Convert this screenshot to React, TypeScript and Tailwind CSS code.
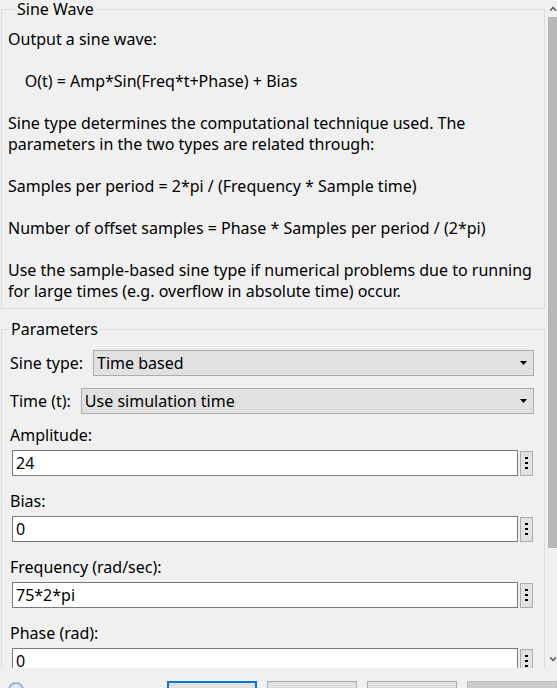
import React from "react";

// Text of the block description
const description: string[][] = [
  ["Output a sine wave:"],
  ["    O(t) = Amp*Sin(Freq*t+Phase) + Bias"],
  [
    "Sine type determines the computational technique used. The",
    "parameters in the two types are related through:",
  ],
  ["Samples per period = 2*pi / (Frequency * Sample time)"],
  ["Number of offset samples = Phase * Samples per period / (2*pi)"],
  [
    "Use the sample-based sine type if numerical problems due to running",
    "for large times (e.g. overflow in absolute time) occur.",
  ],
];

// Edit fields shown under the dropdowns
const fields = [
  { label: "Amplitude:", value: "24" },
  { label: "Bias:", value: "0" },
  { label: "Frequency (rad/sec):", value: "75*2*pi" },
  { label: "Phase (rad):", value: "0" },
];

const font = { fontFamily: '"Noto Sans", "Open Sans", sans-serif' };

// Dropdown that looks like a Windows combo box
const Select = ({ label, value }: { label: string; value: string }) => (
  <div className="flex items-center h-[26px]">
    <span className="pl-[8px] pr-[10px] whitespace-nowrap">{label}</span>
    <div className="flex-1 mr-[10px] h-[26px] flex items-center justify-between bg-[#e1e1e1] border border-[#adadad] pl-[3px] pr-[6px]">
      <span>{value}</span>
      <svg width="7" height="4" viewBox="0 0 7 4">
        <path d="M0 0h7L3.5 4z" fill="#000" />
      </svg>
    </div>
  </div>
);

// Text field with the "..." vertical dots button
const Field = ({ label, value }: { label: string; value: string }) => (
  <div className="flex flex-col">
    <span className="pl-[8px] h-[21px] leading-[21px]">{label}</span>
    <div className="flex items-center mt-[4px] pl-[10px] pr-[11px] gap-[2px]">
      <div className="flex-1 h-[26px] bg-white border border-[#7a7a7a] flex items-center pl-[3px]">
        {value}
      </div>
      <div className="w-[13px] h-[25px] bg-[#e1e1e1] border border-[#adadad] flex flex-col items-center justify-center gap-[3px]">
        <span className="w-[3px] h-[2px] bg-black" />
        <span className="w-[3px] h-[2px] bg-black" />
        <span className="w-[3px] h-[2px] bg-black" />
      </div>
    </div>
  </div>
);

export default function App() {
  return (
    <div
      className="w-[557px] h-[688px] overflow-hidden flex flex-col bg-[#f0f0f0] text-[16px] text-black"
      style={font}
    >
      {/* Scrolling area */}
      <div className="h-[668px] shrink-0 flex overflow-hidden">
        <div className="w-[547px] pl-[1px] pr-[2px] flex flex-col">
          {/* Sine Wave group */}
          <fieldset className="border border-[#dcdcdc] pl-[6px] pt-[11px] pb-[6px]">
            <legend className="ml-[7px] px-[2px] leading-[18px]">Sine Wave</legend>
            <div className="flex flex-col gap-[21px] leading-[21px]">
              {description.map((para, i) => (
                <div key={i} className="whitespace-pre">
                  {para.map((line) => (
                    <div key={line}>{line}</div>
                  ))}
                </div>
              ))}
            </div>
          </fieldset>

          {/* Parameters group */}
          <fieldset className="mt-[11px] border border-[#dcdcdc] border-b-0 pt-[12px] flex flex-col">
            <legend className="ml-[7px] px-[2px] leading-[18px]">Parameters</legend>
            <div className="flex flex-col gap-[12px]">
              <Select label="Sine type:" value="Time based" />
              <Select label="Time (t):" value="Use simulation time" />
            </div>
            <div className="flex flex-col gap-[15px] mt-[11px]">
              {fields.map((f) => (
                <Field key={f.label} label={f.label} value={f.value} />
              ))}
            </div>
          </fieldset>
        </div>

        {/* Scrollbar */}
        <div className="flex-1 flex flex-col">
          <div className="h-[17px] flex items-center justify-end pr-[1px]">
            <svg width="6" height="5" viewBox="0 0 6 5">
              <path d="M0 5L3 1.5L6 5" stroke="#606060" strokeWidth="1.5" fill="none" />
            </svg>
          </div>
          <div className="h-[531px] bg-[#b8b8b8] ml-[1px]" />
          <div className="flex-1" />
          <div className="h-[17px] flex items-center justify-end pr-[1px]">
            <svg width="6" height="5" viewBox="0 0 6 5">
              <path d="M0 0L3 3.5L6 0" stroke="#606060" strokeWidth="1.5" fill="none" />
            </svg>
          </div>
        </div>
      </div>

      {/* Button bar */}
      <div className="flex-1 flex items-start pt-[13px] pl-[8px]">
        <div className="w-[24px] h-[24px] rounded-full border-2 border-[#9fb4cc] bg-[#dfe8f2] mt-[1px]" />
        <div className="flex gap-[10px] ml-[143px]">
          <div className="w-[90px] h-[24px] bg-[#e1e1e1] border-2 border-[#0078d7]" />
          <div className="w-[90px] h-[24px] bg-[#e1e1e1] border border-[#adadad]" />
          <div className="w-[90px] h-[24px] bg-[#e1e1e1] border border-[#adadad]" />
          <div className="w-[90px] h-[24px] bg-[#cccccc] border border-[#bfbfbf]" />
        </div>
      </div>
    </div>
  );
}
